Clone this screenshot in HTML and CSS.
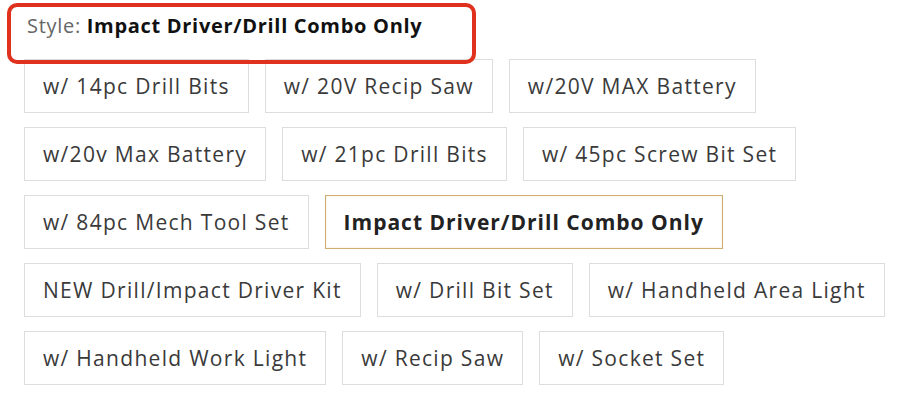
FILE: index.html
```html
<!doctype html>
<html lang="en">
<head>
  <meta charset="UTF-8">
  <title>Style options</title>
  <link rel="stylesheet" href="styles.css">
</head>
<body>
  <div class="picker">
    <div class="label">
      <span class="label-key">Style:</span>
      <span class="label-value">Impact Driver/Drill Combo Only</span>
    </div>
    <div class="highlight"></div>

    <div class="options">
      <div class="row">
        <button class="option">w/ 14pc Drill Bits</button>
        <button class="option">w/ 20V Recip Saw</button>
        <button class="option">w/20V MAX Battery</button>
      </div>
      <div class="row">
        <button class="option">w/20v Max Battery</button>
        <button class="option">w/ 21pc Drill Bits</button>
        <button class="option">w/ 45pc Screw Bit Set</button>
      </div>
      <div class="row">
        <button class="option">w/ 84pc Mech Tool Set</button>
        <button class="option selected">Impact Driver/Drill Combo Only</button>
      </div>
      <div class="row">
        <button class="option">NEW Drill/Impact Driver Kit</button>
        <button class="option">w/ Drill Bit Set</button>
        <button class="option">w/ Handheld Area Light</button>
      </div>
      <div class="row">
        <button class="option">w/ Handheld Work Light</button>
        <button class="option">w/ Recip Saw</button>
        <button class="option">w/ Socket Set</button>
      </div>
    </div>
  </div>
</body>
</html>
```

FILE: styles.css
```css
html, body {
  margin: 0;
  background: #fff;
}
body {
  font-family: "Open Sans", "Noto Sans", sans-serif;
  color: #333;
}
.picker {
  position: relative;
  padding: 12px 0 0 24px;
}
.label {
  padding-left: 3px;
  height: 32px;
  line-height: 28px;
  font-size: 20px;
  letter-spacing: 0.7px;
}
.label-key {
  color: #666;
}
.label-value {
  font-weight: 700;
  color: #111;
}
/* annotation drawn over the header */
.highlight {
  position: absolute;
  top: 3px;
  left: 7px;
  width: 461px;
  height: 53px;
  border: 4px solid #e0301e;
  border-radius: 10px;
}
.options {
  display: flex;
  flex-direction: column;
  gap: 14px;
  padding-top: 15px;
}
.row {
  display: flex;
  gap: 16px;
}
.option {
  height: 54px;
  padding: 0 18px;
  border: 1px solid #ddd;
  background: #fff;
  font-family: inherit;
  font-size: 21px;
  letter-spacing: 1.3px;
  color: #3a3a3a;
  white-space: nowrap;
}
.option.selected {
  border-color: #cfae72;
  font-weight: 700;
  letter-spacing: 1px;
  color: #222;
  box-shadow: inset 0 0 2px #f3e4c4;
}
```
